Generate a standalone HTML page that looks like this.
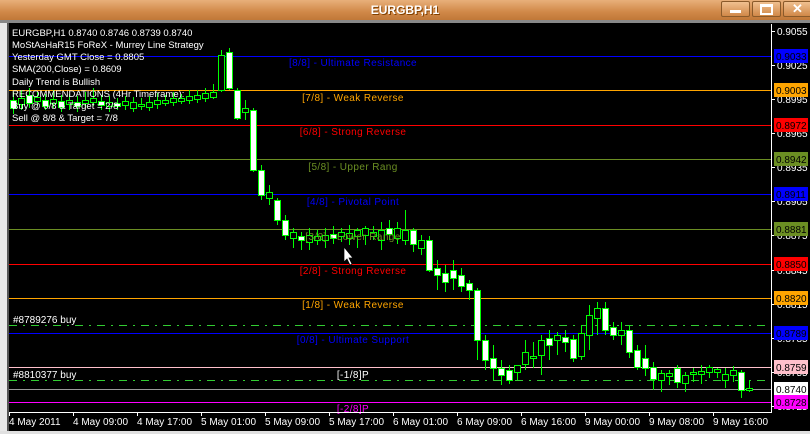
<!DOCTYPE html>
<html><head><style>
body{margin:0;width:810px;height:434px;overflow:hidden;background:#d4d0c8;font-family:"Liberation Sans",sans-serif;position:relative}
.tb{position:absolute;left:0;top:0;width:810px;height:20px;background:linear-gradient(#e8b07a,#d08848 60%,#c07838)}
.tt{position:absolute;left:0;width:810px;top:3px;text-align:center;color:#fff;font-weight:bold;font-size:12px;text-shadow:1px 1px 0 #804000}
.bt{position:absolute;top:1px;width:27px;height:14px;border:1px solid #8a5a2a;border-radius:2px;background:linear-gradient(#f0c090,#d08848)}
svg{position:absolute;left:0;top:0}
</style></head><body>
<div class="tb"></div>
<div class="tt">EURGBP,H1</div>
<div class="bt" style="left:721px"><div style="position:absolute;left:8px;top:8px;width:11px;height:3px;background:#fff"></div></div>
<div class="bt" style="left:752px"><div style="position:absolute;left:7px;top:2px;border:2px solid #fff;border-top-width:3px;box-sizing:border-box;width:13px;height:11px"></div></div>
<div class="bt" style="left:783px;color:#fff;font-weight:bold;font-size:13px;text-align:center;line-height:14px">✕</div>
<svg width="810" height="434" xmlns="http://www.w3.org/2000/svg" font-family="Liberation Sans, sans-serif">
<rect x="0" y="20" width="810" height="3" fill="#888"/>
<rect x="0" y="23" width="8" height="411" fill="#e8e8e8"/>
<rect x="7" y="23" width="2" height="411" fill="#555"/>
<rect x="9" y="23" width="801" height="408" fill="#000"/>
<rect x="0" y="431" width="810" height="3" fill="#e0e0e0"/>
<g>
<line x1="9" y1="56.5" x2="771" y2="56.5" stroke="#0000ff"/>
<line x1="9" y1="90.5" x2="771" y2="90.5" stroke="#ffa500"/>
<line x1="9" y1="125.5" x2="771" y2="125.5" stroke="#ff0000"/>
<line x1="9" y1="159.5" x2="771" y2="159.5" stroke="#6b8e23"/>
<line x1="9" y1="194.5" x2="771" y2="194.5" stroke="#0000ff"/>
<line x1="9" y1="229.5" x2="771" y2="229.5" stroke="#6b8e23"/>
<line x1="9" y1="264.5" x2="771" y2="264.5" stroke="#ff0000"/>
<line x1="9" y1="298.5" x2="771" y2="298.5" stroke="#ffa500"/>
<line x1="9" y1="333.5" x2="771" y2="333.5" stroke="#0000ff"/>
<line x1="9" y1="367.5" x2="771" y2="367.5" stroke="#ffc0cb"/>
<line x1="9" y1="389.5" x2="771" y2="389.5" stroke="#999"/>
<line x1="9" y1="402.5" x2="771" y2="402.5" stroke="#ff00ff"/>
<line x1="9" y1="325.5" x2="771" y2="325.5" stroke="#32cd32" stroke-dasharray="8,6,2,6"/>
<line x1="9" y1="380.5" x2="771" y2="380.5" stroke="#32cd32" stroke-dasharray="8,6,2,6"/>
</g>
<g id="c" stroke="#00ff00"></g>
<g font-size="10" text-anchor="middle" letter-spacing="0.4">
<text x="353" y="66" fill="#0000ff">[8/8] - Ultimate Resistance</text>
<text x="353" y="101" fill="#ffa500">[7/8] - Weak Reverse</text>
<text x="353" y="135" fill="#ff0000">[6/8] - Strong Reverse</text>
<text x="353" y="170" fill="#6b8e23">[5/8] - Upper Rang</text>
<text x="353" y="205" fill="#0000ff">[4/8] - Pivotal Point</text>
<text x="353" y="240" fill="#6b8e23">[3/8] - Lower Range</text>
<text x="353" y="274" fill="#ff0000">[2/8] - Strong Reverse</text>
<text x="353" y="308" fill="#ffa500">[1/8] - Weak Reverse</text>
<text x="353" y="343" fill="#0000ff">[0/8] - Ultimate Support</text>
<text x="353" y="378" fill="#fff">[-1/8]P</text>
<text x="353" y="412" fill="#ff00ff">[-2/8]P</text>
</g>
<g font-size="10" fill="#fff">
<text x="13" y="323">#8789276 buy</text>
<text x="13" y="378">#8810377 buy</text>
</g>
<g font-size="10" fill="#fff" stroke="#fff">
<line x1="771" y1="31.5" x2="775" y2="31.5"/><text x="777" y="35" stroke="none">0.9055</text>
<line x1="771" y1="65.5" x2="775" y2="65.5"/><text x="777" y="69" stroke="none">0.9025</text>
<line x1="771" y1="99.5" x2="775" y2="99.5"/><text x="777" y="103" stroke="none">0.8995</text>
<line x1="771" y1="133.5" x2="775" y2="133.5"/><text x="777" y="137" stroke="none">0.8965</text>
<line x1="771" y1="167.5" x2="775" y2="167.5"/><text x="777" y="171" stroke="none">0.8935</text>
<line x1="771" y1="201.5" x2="775" y2="201.5"/><text x="777" y="205" stroke="none">0.8905</text>
<line x1="771" y1="235.5" x2="775" y2="235.5"/><text x="777" y="239" stroke="none">0.8875</text>
<line x1="771" y1="270.5" x2="775" y2="270.5"/><text x="777" y="274" stroke="none">0.8845</text>
<line x1="771" y1="304.5" x2="775" y2="304.5"/><text x="777" y="308" stroke="none">0.8815</text>
<line x1="771" y1="338.5" x2="775" y2="338.5"/><text x="777" y="342" stroke="none">0.8785</text>
<line x1="771" y1="372.5" x2="775" y2="372.5"/><text x="777" y="376" stroke="none">0.8755</text>
<line x1="771" y1="406.5" x2="775" y2="406.5"/><text x="777" y="410" stroke="none">0.8725</text>
</g>
<g font-size="10" fill="#000">
<rect x="774" y="49" width="34" height="14" fill="#0000ff"/><text x="776" y="60">0.9033</text>
<rect x="774" y="83" width="34" height="14" fill="#ffa500"/><text x="776" y="94">0.9003</text>
<rect x="774" y="118" width="34" height="14" fill="#ff0000"/><text x="776" y="129">0.8972</text>
<rect x="774" y="152" width="34" height="14" fill="#6b8e23"/><text x="776" y="163">0.8942</text>
<rect x="774" y="187" width="34" height="14" fill="#0000ff"/><text x="776" y="198">0.8911</text>
<rect x="774" y="222" width="34" height="14" fill="#6b8e23"/><text x="776" y="233">0.8881</text>
<rect x="774" y="257" width="34" height="14" fill="#ff0000"/><text x="776" y="268">0.8850</text>
<rect x="774" y="291" width="34" height="14" fill="#ffa500"/><text x="776" y="302">0.8820</text>
<rect x="774" y="326" width="34" height="14" fill="#0000ff"/><text x="776" y="337">0.8789</text>
<rect x="774" y="360" width="34" height="14" fill="#ffc0cb"/><text x="776" y="371">0.8759</text>
<rect x="774" y="382" width="34" height="14" fill="#fff"/><text x="776" y="393">0.8740</text>
<rect x="774" y="395" width="34" height="14" fill="#ff00ff"/><text x="776" y="406">0.8728</text>
</g>
<g font-size="10" fill="#fff" stroke="#fff">
<line x1="9.5" y1="412" x2="9.5" y2="416"/><text x="9" y="425" stroke="none">4 May 2011</text>
<line x1="73.5" y1="412" x2="73.5" y2="416"/><text x="73" y="425" stroke="none">4 May 09:00</text>
<line x1="137.5" y1="412" x2="137.5" y2="416"/><text x="137" y="425" stroke="none">4 May 17:00</text>
<line x1="201.5" y1="412" x2="201.5" y2="416"/><text x="201" y="425" stroke="none">5 May 01:00</text>
<line x1="265.5" y1="412" x2="265.5" y2="416"/><text x="265" y="425" stroke="none">5 May 09:00</text>
<line x1="329.5" y1="412" x2="329.5" y2="416"/><text x="329" y="425" stroke="none">5 May 17:00</text>
<line x1="393.5" y1="412" x2="393.5" y2="416"/><text x="393" y="425" stroke="none">6 May 01:00</text>
<line x1="457.5" y1="412" x2="457.5" y2="416"/><text x="457" y="425" stroke="none">6 May 09:00</text>
<line x1="521.5" y1="412" x2="521.5" y2="416"/><text x="521" y="425" stroke="none">6 May 16:00</text>
<line x1="585.5" y1="412" x2="585.5" y2="416"/><text x="585" y="425" stroke="none">9 May 00:00</text>
<line x1="649.5" y1="412" x2="649.5" y2="416"/><text x="649" y="425" stroke="none">9 May 08:00</text>
<line x1="713.5" y1="412" x2="713.5" y2="416"/><text x="713" y="425" stroke="none">9 May 16:00</text>
</g>
<g id="info" font-size="9.5" fill="#fff">
<text x="12" y="36">EURGBP,H1  0.8740 0.8746 0.8739 0.8740</text>
<text x="12" y="48">MoStAsHaR15 FoReX - Murrey Line Strategy</text>
<text x="12" y="60">Yesterday GMT Close = 0.8805</text>
<text x="12" y="72">SMA(200,Close) = 0.8609</text>
<text x="12" y="85">Daily Trend is Bullish</text>
<text x="12" y="97">RECOMMENDATIONS (4Hr Timeframe):</text>
<text x="12" y="109">Buy  @ 0/8 &amp; Target = 2/8</text>
<text x="12" y="121">Sell @ 8/8 &amp; Target = 7/8</text>
</g>
<line x1="771.5" y1="24" x2="771.5" y2="412" stroke="#fff"/>
<line x1="9" y1="412.5" x2="772" y2="412.5" stroke="#fff"/>
<path d="M344,247 L344,262 L347,259 L350,265 L352,264 L349,258 L353,258 Z" fill="#fff" stroke="#000" stroke-width="0.7"/>
</svg>
<script>
var D="13,100,108,1,92,114;21,98,104,0,90,110;29,95,103,1,88,108;37,97,101,0,92,106;45,100,106,1,94,110;53,99,103,0,90,108;61,101,107,1,95,112;69,100,104,0,94,110;77,102,106,1,96,112;85,100,103,0,92,108;93,98,102,0,88,106;101,101,105,1,95,110;109,102,106,0,96,112;117,103,106,1,98,110;125,101,105,0,96,110;133,102,108,0,97,112;141,104,106,0,98,110;149,102,107,0,96,111;157,100,104,0,93,109;165,100,103,0,95,106;173,98,102,0,92,106;181,98,101,0,94,104;189,96,100,0,90,104;197,95,99,0,90,103;205,93,98,0,88,102;213,92,97,0,84,99;221,55,90,0,50,92;229,52,88,1,48,90;237,90,118,1,88,120;245,108,112,0,100,120;253,110,170,1,108,172;261,170,195,1,165,200;269,192,198,0,185,205;277,200,220,1,198,225;285,220,235,1,215,240;293,232,238,0,228,248;301,236,240,1,232,250;309,235,242,0,228,250;317,236,240,0,230,245;325,235,240,0,228,248;333,234,238,1,226,244;341,232,236,0,228,242;349,233,238,0,225,245;357,230,236,0,228,248;365,228,235,0,226,245;373,232,236,0,226,240;381,230,240,0,222,250;389,228,234,1,220,240;397,228,238,0,222,244;405,230,240,0,210,245;413,230,244,1,228,252;421,240,248,0,235,255;429,240,270,1,236,272;437,268,275,1,260,290;445,273,282,1,265,292;453,270,278,1,260,290;461,275,286,1,268,292;469,283,290,1,280,300;477,290,340,1,288,360;485,340,360,1,335,370;493,358,368,1,345,380;501,368,375,1,360,385;509,370,380,1,365,384;517,365,372,0,365,380;525,352,364,0,340,370;533,356,358,0,342,368;541,340,355,0,335,375;549,338,345,1,330,360;557,335,340,0,332,355;565,337,342,1,330,352;573,339,358,1,335,362;581,333,356,0,325,360;589,315,335,0,305,350;597,308,318,0,302,335;605,308,330,1,302,335;613,327,335,1,322,340;621,330,335,0,322,345;629,330,352,1,325,358;637,350,367,1,345,370;645,358,368,1,345,376;653,367,379,1,362,390;661,373,380,0,370,392;669,373,376,0,370,385;677,368,382,1,365,388;685,375,383,0,372,392;693,372,374,0,368,382;701,371,374,0,365,384;709,367,372,0,365,378;717,369,372,0,368,378;725,374,380,0,368,388;733,370,375,0,366,382;741,372,390,1,370,398;749,388,390,0,380,392";
var g=document.getElementById('c'),h='';
D.split(';').forEach(function(s){var a=s.split(',').map(Number);
h+='<line x1="'+(a[0]+0.5)+'" y1="'+a[4]+'" x2="'+(a[0]+0.5)+'" y2="'+a[5]+'"/>';
h+='<rect x="'+(a[0]-2.5)+'" y="'+(a[1]+0.5)+'" width="6" height="'+Math.max(2,a[2]-a[1])+'" fill="'+(a[3]?'#fff':'#000')+'"/>';});
g.innerHTML=h;
</script>
</body></html>
